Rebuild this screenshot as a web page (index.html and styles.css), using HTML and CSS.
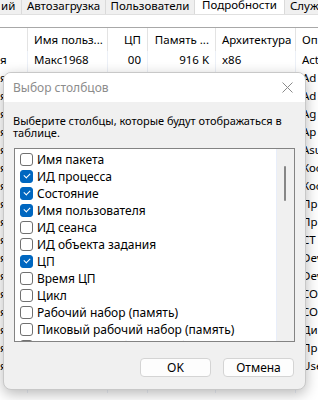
FILE: index.html
```html
<!DOCTYPE html>
<html>
  <head>
    <meta charset="UTF-8" />
    <title>Подробности</title>
    <link rel="stylesheet" href="styles.css">
  </head>
  <body>
    <div class="tabs">
      <div class="tab tab-first">ий</div>
      <div class="tab tab-auto">Автозагрузка</div>
      <div class="tab tab-users">Пользователи</div>
      <div class="tab tab-details active">Подробности</div>
      <div class="tab tab-svc">Служ</div>
    </div>
    <div class="toolbar"></div>
    <div class="grid">
      <div class="row head">
        <div class="cell"></div>
        <div class="cell">Имя польз...</div>
        <div class="cell right">ЦП</div>
        <div class="cell right">Память ...</div>
        <div class="cell">Архитектура</div>
        <div class="cell">Оп</div>
      </div>
      <div class="row"><div class="cell clip">я</div><div class="cell">Макс1968</div><div class="cell right">00</div><div class="cell right">916 K</div><div class="cell">x86</div><div class="cell">Act</div></div>
      <div class="row"><div class="cell clip">я</div><div class="cell"></div><div class="cell"></div><div class="cell"></div><div class="cell"></div><div class="cell">Ad</div></div>
      <div class="row"><div class="cell clip">я</div><div class="cell"></div><div class="cell"></div><div class="cell"></div><div class="cell"></div><div class="cell">Ad</div></div>
      <div class="row"><div class="cell clip">я</div><div class="cell"></div><div class="cell"></div><div class="cell"></div><div class="cell"></div><div class="cell">Ag</div></div>
      <div class="row"><div class="cell clip">я</div><div class="cell"></div><div class="cell"></div><div class="cell"></div><div class="cell"></div><div class="cell">Ap</div></div>
      <div class="row"><div class="cell clip">я</div><div class="cell"></div><div class="cell"></div><div class="cell"></div><div class="cell"></div><div class="cell">Asu</div></div>
      <div class="row"><div class="cell clip">я</div><div class="cell"></div><div class="cell"></div><div class="cell"></div><div class="cell"></div><div class="cell">Кос</div></div>
      <div class="row"><div class="cell clip">я</div><div class="cell"></div><div class="cell"></div><div class="cell"></div><div class="cell"></div><div class="cell">Кос</div></div>
      <div class="row"><div class="cell clip">я</div><div class="cell"></div><div class="cell"></div><div class="cell"></div><div class="cell"></div><div class="cell">Пр</div></div>
      <div class="row"><div class="cell clip">я</div><div class="cell"></div><div class="cell"></div><div class="cell"></div><div class="cell"></div><div class="cell">Пр</div></div>
      <div class="row"><div class="cell clip">я</div><div class="cell"></div><div class="cell"></div><div class="cell"></div><div class="cell"></div><div class="cell">СТ</div></div>
      <div class="row"><div class="cell clip">я</div><div class="cell"></div><div class="cell"></div><div class="cell"></div><div class="cell"></div><div class="cell">Dev</div></div>
      <div class="row"><div class="cell clip">я</div><div class="cell"></div><div class="cell"></div><div class="cell"></div><div class="cell"></div><div class="cell">Dev</div></div>
      <div class="row"><div class="cell clip">я</div><div class="cell"></div><div class="cell"></div><div class="cell"></div><div class="cell"></div><div class="cell">CO</div></div>
      <div class="row"><div class="cell clip">я</div><div class="cell"></div><div class="cell"></div><div class="cell"></div><div class="cell"></div><div class="cell">CO</div></div>
      <div class="row"><div class="cell clip">я</div><div class="cell"></div><div class="cell"></div><div class="cell"></div><div class="cell"></div><div class="cell">Ди</div></div>
      <div class="row"><div class="cell clip">я</div><div class="cell"></div><div class="cell"></div><div class="cell"></div><div class="cell"></div><div class="cell">Пр</div></div>
      <div class="row"><div class="cell clip">я</div><div class="cell"></div><div class="cell"></div><div class="cell"></div><div class="cell"></div><div class="cell">Use</div></div>
      <div class="row"><div class="cell clip"></div><div class="cell"></div><div class="cell"></div><div class="cell"></div><div class="cell"></div><div class="cell"></div></div>
    </div>

    <div class="dialog">
      <div class="dialog-title">
        <span>Выбор столбцов</span>
        <svg class="close" width="11" height="11" viewBox="0 0 11 11">
          <path d="M0.5 0.5 L10.5 10.5 M10.5 0.5 L0.5 10.5" stroke="#8a8a8a" stroke-width="1" fill="none" />
        </svg>
      </div>
      <div class="dialog-body">
        <p class="hint">Выберите столбцы, которые будут отображаться в таблице.</p>
        <div class="listbox">
          <ul class="items">
            <li><span class="box"></span>Имя пакета</li>
            <li><span class="box on"></span>ИД процесса</li>
            <li><span class="box on"></span>Состояние</li>
            <li><span class="box on"></span>Имя пользователя</li>
            <li><span class="box"></span>ИД сеанса</li>
            <li><span class="box"></span>ИД объекта задания</li>
            <li><span class="box on"></span>ЦП</li>
            <li><span class="box"></span>Время ЦП</li>
            <li><span class="box"></span>Цикл</li>
            <li><span class="box"></span>Рабочий набор (память)</li>
            <li><span class="box"></span>Пиковый рабочий набор (память)</li>
            <li><span class="box"></span>Изменение рабочего набора (память)</li>
          </ul>
          <div class="scrollbar"><div class="thumb"></div></div>
        </div>
        <div class="buttons">
          <button class="btn">OK</button>
          <button class="btn">Отмена</button>
        </div>
      </div>
    </div>
  </body>
</html>
```

FILE: styles.css
```css
* {
  box-sizing: border-box;
}
body {
  margin: 0;
  width: 318px;
  height: 400px;
  overflow: hidden;
  position: relative;
  background: #ffffff;
  color: #000000;
  font-family: "Noto Sans", "Open Sans", sans-serif;
  font-size: 11.5px;
}

/* tab strip */
.tabs {
  display: flex;
  height: 15px;
  background: #f0f0f0;
  border-bottom: 1px solid #e0e0e0;
  overflow: hidden;
}
.tab {
  flex: none;
  height: 15px;
  line-height: 12px;
  text-align: center;
  border-right: 1px solid #dadada;
  white-space: nowrap;
  overflow: hidden;
}
.tab-first { width: 22px; text-align: left; padding-left: 1px; }
.tab-auto { width: 84px; }
.tab-users { width: 89px; }
.tab-details { width: 90px; }
.tab-svc { width: 40px; text-align: left; padding-left: 5px; border-right: none; }
.tab.active {
  background: #ffffff;
  height: 16px;
  line-height: 9px;
}

.toolbar {
  height: 13px;
  border-bottom: 1px solid #a8a8a8;
}

/* process table */
.row {
  display: grid;
  grid-template-columns: 27px 80px 40px 68px 80px 1fr;
  height: 18px;
  line-height: 18px;
}
.row.head {
  height: 23px;
  line-height: 23px;
}
.cell {
  padding: 0 6px;
  white-space: nowrap;
  overflow: hidden;
  border-left: 1px solid #ecf0f7;
}
.row.head .cell {
  border-left: 1px solid #e3e3e3;
}
.cell:first-child,
.row.head .cell:first-child {
  border-left: none;
}
.cell.right {
  text-align: right;
}
.cell.clip {
  padding: 0;
}

/* dialog overlay */
.dialog {
  position: absolute;
  left: 3px;
  top: 72px;
  width: 303px;
  height: 318px;
  border: 1px solid #c8c8c8;
  border-radius: 8px;
  overflow: hidden;
  background: #f0f0f0;
  box-shadow: 0 4px 14px rgba(0, 0, 0, 0.28);
  display: flex;
  flex-direction: column;
  font-size: 12px;
}
.dialog-title {
  height: 29px;
  background: #ffffff;
  display: flex;
  align-items: center;
  justify-content: space-between;
  padding: 0 12px 0 9px;
  color: #8c8c8c;
}
.dialog-body {
  flex: 1;
  padding: 13px 9px 0 9px;
  display: flex;
  flex-direction: column;
}
.hint {
  margin: 0 0 9px 0;
  line-height: 12px;
  font-size: 11px;
}
.listbox {
  height: 194px;
  border: 1px solid #838383;
  background: #ffffff;
  display: flex;
  overflow: hidden;
  margin-left: 1px;
  margin-right: 1px;
}
.items {
  flex: 1;
  list-style: none;
  margin: 0;
  padding: 2px 0 0 5px;
}
.items li {
  height: 17px;
  display: flex;
  align-items: center;
  gap: 4px;
  white-space: nowrap;
}
.box {
  width: 13px;
  height: 13px;
  border: 1px solid #707070;
  border-radius: 3px;
  background: #ffffff;
  flex: none;
  position: relative;
}
.box.on {
  background: #0067c0;
  border-color: #0067c0;
}
.box.on::after {
  content: "";
  position: absolute;
  left: 3px;
  top: 2px;
  width: 5px;
  height: 3px;
  border-left: 1px solid #ffffff;
  border-bottom: 1px solid #ffffff;
  transform: rotate(-45deg);
}
.scrollbar {
  width: 18px;
  flex: none;
  background: #f0f0f0;
  border-left: 1px solid #e8eefa;
  position: relative;
}
.thumb {
  position: absolute;
  left: 7px;
  top: 17px;
  width: 2px;
  height: 35px;
  border-radius: 1px;
  background: #868686;
}
.buttons {
  display: flex;
  justify-content: flex-end;
  gap: 12px;
  margin-top: 16px;
  padding-right: 2px;
}
.btn {
  width: 71px;
  height: 19px;
  font: inherit;
  color: #000000;
  background: #fdfdfd;
  border: 1px solid #d4d4d4;
  border-radius: 4px;
  padding: 0;
}
```
